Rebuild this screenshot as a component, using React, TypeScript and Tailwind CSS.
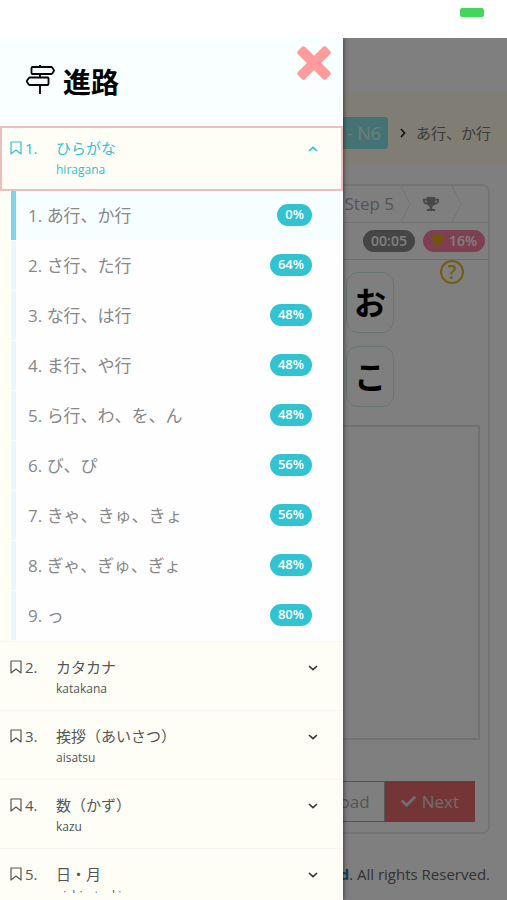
import React, { useState } from "react";
import { FaCheck, FaTrophy } from "react-icons/fa";

const lessons = [
  { id: 1, title: "あ行、か行", progress: 0 },
  { id: 2, title: "さ行、た行", progress: 64 },
  { id: 3, title: "な行、は行", progress: 48 },
  { id: 4, title: "ま行、や行", progress: 48 },
  { id: 5, title: "ら行、わ、を、ん", progress: 48 },
  { id: 6, title: "び、ぴ", progress: 56 },
  { id: 7, title: "きゃ、きゅ、きょ", progress: 56 },
  { id: 8, title: "ぎゃ、ぎゅ、ぎょ", progress: 48 },
  { id: 9, title: "っ", progress: 80 },
];

const chapters = [
  { id: 1, title: "ひらがな", reading: "hiragana", lessons },
  { id: 2, title: "カタカナ", reading: "katakana", lessons: [] },
  { id: 3, title: "挨拶（あいさつ）", reading: "aisatsu", lessons: [] },
  { id: 4, title: "数（かず）", reading: "kazu", lessons: [] },
  { id: 5, title: "日・月", reading: "nichi・tsuki", lessons: [] },
];

function SignpostIcon() {
  return (
    <svg
      width="30"
      height="34"
      viewBox="0 0 30 34"
      fill="none"
      stroke="currentColor"
      strokeWidth="1.8"
      strokeLinejoin="round"
      aria-hidden="true"
    >
      <path d="M15 0v2M15 9v3.5M15 20v9" />
      <path d="M7.5 2H26q.8 0 1.2.6l1.6 2.4q.4.5 0 1l-1.6 2.4q-.4.6-1.2.6H7.5q-1 0-1-1V3q0-1 1-1z" />
      <path d="M22.5 12.5H5q-.8 0-1.2.6L1.9 15.7q-.4.5 0 1L3.8 19.4q.4.6 1.2.6H22.5q1 0 1-1v-5.5q0-1-1-1z" />
    </svg>
  );
}

function CloseIcon() {
  return (
    <svg width="34" height="34" viewBox="0 0 34 34" fill="currentColor" aria-hidden="true">
      <rect x="-3" y="12" width="40" height="10" rx="2.5" transform="rotate(45 17 17)" />
      <rect x="-3" y="12" width="40" height="10" rx="2.5" transform="rotate(-45 17 17)" />
    </svg>
  );
}

function BookmarkIcon() {
  return (
    <svg
      width="12"
      height="14"
      viewBox="0 0 12 14"
      fill="none"
      stroke="currentColor"
      strokeWidth="1.2"
      strokeLinejoin="round"
      aria-hidden="true"
    >
      <path d="M1 1h10v12L6 9l-5 4z" />
    </svg>
  );
}

function Chevron({ className }: { className?: string }) {
  return (
    <svg
      width="10"
      height="6"
      viewBox="0 0 10 6"
      fill="none"
      stroke="currentColor"
      strokeWidth="1.6"
      className={className}
      aria-hidden="true"
    >
      <path d="M1 1l4 3.6L9 1" />
    </svg>
  );
}

function StepArrow() {
  return (
    <svg width="11" height="36" viewBox="0 0 11 36" fill="none" stroke="#e8e8e8" aria-hidden="true">
      <path d="M1 0l9 18-9 18" />
    </svg>
  );
}

function ChapterItem({
  chapter,
  isOpen,
  onToggle,
}: {
  chapter: (typeof chapters)[0];
  isOpen: boolean;
  onToggle: () => void;
}) {
  return (
    <li>
      <button
        type="button"
        aria-expanded={isOpen}
        onClick={onToggle}
        className={`flex w-full items-start text-left cursor-pointer bg-[#fffef6] ${
          isOpen
            ? "h-[65px] pt-[9px] pl-2 pr-[23px] border-2 border-[#ecbfbf] text-[#2fbfd3]"
            : "h-[69px] pt-[14px] pl-[10px] pr-[25px] border-t border-[#f7f6f0] text-[#555]"
        }`}
      >
        <span className="flex h-[22px] w-[46px] items-center gap-[3px] text-[15px]">
          <BookmarkIcon />
          {chapter.id}.
        </span>
        <span className="flex-1">
          <span className="block text-[15px] leading-[22px]">{chapter.title}</span>
          <span className="block text-xs leading-[22px]">{chapter.reading}</span>
        </span>
        <span className="flex h-6 items-center">
          <Chevron className={isOpen ? "rotate-180" : "text-[#333]"} />
        </span>
      </button>

      {isOpen && (
        <ul className="pl-[11px] bg-[#fffef4]">
          {chapter.lessons.map((lesson, index) => (
            <li key={lesson.id} className="border-b border-[#fefefe]">
              <a
                href={`#lesson-${lesson.id}`}
                className={`flex h-[49px] items-center justify-between border-l-[5px] pl-3 pr-[31px] text-[17px] text-[#888] ${
                  index === 0
                    ? "border-[#7fd3e6] bg-[#f7feff]"
                    : "border-[#e8f8fd] bg-[#fefefe]"
                }`}
              >
                <span>
                  {lesson.id}. {lesson.title}
                </span>
                <span className="mb-px h-[22px] rounded-full bg-[#31c3d1] px-2 text-[13px] leading-5 font-semibold text-white">
                  {lesson.progress}%
                </span>
              </a>
            </li>
          ))}
        </ul>
      )}
    </li>
  );
}

function LessonPage() {
  return (
    <div className="flex h-full flex-col bg-white text-[#777]">
      <nav className="mt-[55px] flex h-[70px] shrink-0 items-center justify-end bg-[#fffae9] pr-4 pt-[10px]">
        <a
          href="#level"
          className="h-8 rounded bg-[#86e6e4] px-[7px] text-[18px] leading-8 text-[#e4f8f8]"
        >
          - N6
        </a>
        <Chevron className="ml-[10px] mr-2 -rotate-90 text-[#222]" />
        <span className="text-[15px] text-[#777]">あ行、か行</span>
      </nav>

      <main className="mx-[17px] mt-[21px] flex h-[650px] shrink-0 flex-col rounded-lg border-2 border-[#e8e8e8]">
        <div className="flex h-[37px] items-center justify-end border-b border-[#e8e8e8] pr-[26px]">
          <span className="mr-[6px] text-[17px] text-[#aaa]">Step 5</span>
          <StepArrow />
          <FaTrophy size={16} className="mx-3 text-[#909090]" />
          <StepArrow />
        </div>
        <div className="flex h-[37px] items-center justify-end gap-2 border-b border-[#dadada] pr-[3px] pb-px text-sm font-semibold text-white">
          <span className="h-[22px] rounded-full bg-[#8a8a8a] px-2 leading-[21px]">00:05</span>
          <span className="flex h-[22px] items-center gap-[5px] rounded-full bg-[#ff7fa5] px-2">
            <FaTrophy size={13} className="text-[#e0b000]" />
            16%
          </span>
        </div>

        <div className="flex items-start justify-end gap-[46px] pr-6">
          <div className="mt-3 grid gap-[13px] font-bold text-black text-[32px]">
            {["お", "こ"].map((kana) => (
              <div
                key={kana}
                className="flex h-[61px] w-12 items-center justify-center rounded-xl border border-[#d3ecdf]"
              >
                {kana}
              </div>
            ))}
          </div>
          <button
            type="button"
            aria-label="Help"
            className="flex size-6 items-center justify-center rounded-full border-2 border-[#e2bd2c] text-[19px] leading-none font-semibold text-[#e2bd2c]"
          >
            ?
          </button>
        </div>

        <div className="mx-2 mt-[18px] h-[315px] border-2 border-[#e2e2e2]" />

        <div className="mt-[41px] mr-[13px] flex justify-end text-[17px]">
          <button type="button" className="h-[41px] border border-[#aaa] px-[14px] text-[#aaa]">
            Reload
          </button>
          <button
            type="button"
            className="flex h-[41px] items-center gap-[6px] bg-[#e86a6e] px-4 text-[#ddd]"
          >
            <FaCheck size={15} />
            Next
          </button>
        </div>
      </main>

      <footer className="mt-7 mr-[17px] text-right text-[15px] leading-6 whitespace-nowrap text-[#666]">
        <b className="text-[#2a7fb0]">Ltd</b>. All rights Reserved.
      </footer>
    </div>
  );
}

export default function App() {
  const [openId, setOpenId] = useState(1);
  const [isDrawerOpen, setIsDrawerOpen] = useState(true);

  return (
    <div className="flex h-screen flex-col overflow-hidden bg-white font-['Open_Sans','Noto_Sans_CJK_JP',sans-serif]">
      {/* Status bar */}
      <header className="flex h-[38px] shrink-0 items-start justify-end pr-[23px] pt-2">
        <span className="h-[9px] w-6 rounded-xs bg-[#43d65a]" />
      </header>

      <div className="relative min-h-0 flex-1 overflow-hidden">
        <LessonPage />

        {isDrawerOpen && (
          <>
            <div className="absolute inset-0 bg-black/50" />
            <aside className="absolute inset-y-0 left-0 right-41 flex flex-col bg-[#fffef6] pb-[7px] shadow-[1px_0_4px_rgba(0,0,0,0.5)]">
              <div className="flex h-[88px] shrink-0 items-start justify-between bg-[#f9feff] pl-[25px] pr-3">
                <h1 className="flex items-center gap-2 pt-[22px] text-[28px] leading-[44px] font-bold text-black">
                  <SignpostIcon />
                  進路
                </h1>
                <button
                  type="button"
                  aria-label="Close"
                  onClick={() => setIsDrawerOpen(false)}
                  className="mt-2 text-[#ff9a9d] cursor-pointer"
                >
                  <CloseIcon />
                </button>
              </div>
              <ul className="min-h-0 flex-1 overflow-hidden">
                {chapters.map((chapter) => (
                  <ChapterItem
                    key={chapter.id}
                    chapter={chapter}
                    isOpen={chapter.id === openId}
                    onToggle={() => setOpenId(chapter.id === openId ? 0 : chapter.id)}
                  />
                ))}
              </ul>
            </aside>
          </>
        )}
      </div>
    </div>
  );
}
